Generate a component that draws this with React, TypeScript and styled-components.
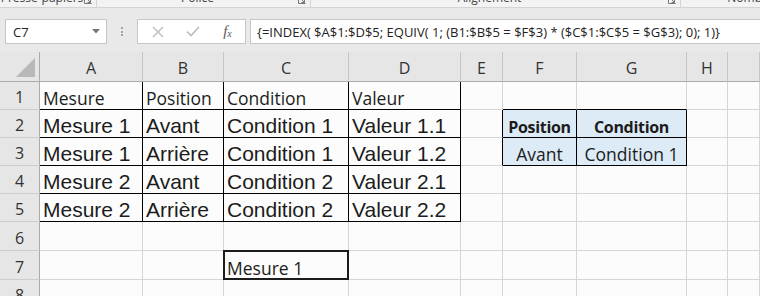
import React from 'react';
import styled, { createGlobalStyle, css } from 'styled-components';

const GlobalStyle = createGlobalStyle`
  html, body { margin: 0; padding: 0; background: #e9e9e9; overflow: hidden; }
  body { width: 760px; height: 296px; }
`;

const Page = styled.div`
  width: 760px;
  height: 296px;
  overflow: hidden;
  display: flex;
  flex-direction: column;
  background: #e9e9e9;
`;

/* ---------- Ribbon strip (cut-off group labels) ---------- */
const RibbonStrip = styled.div`
  height: 8px;
  box-sizing: border-box;
  display: flex;
  background: #f3f3f3;
  border-bottom: 1px solid #d4d4d4;
  overflow: hidden;
  flex-shrink: 0;
`;

const RibbonGroup = styled.div<{ $w: number }>`
  width: ${p => p.$w}px;
  flex-shrink: 0;
  display: flex;
  align-items: flex-start;
  box-sizing: border-box;
  border-right: 1px solid #d4d4d4;
`;

const RibbonLabel = styled.span`
  flex: 1;
  text-align: center;
  font-family: 'Open Sans', sans-serif;
  font-size: 12px;
  line-height: 12px;
  margin-top: -8px;
  color: #444;
  white-space: nowrap;
`;

const Launcher = styled.svg`
  width: 8px;
  height: 8px;
  margin: -4px 4px 0 0;
  flex-shrink: 0;
`;

/* ---------- Formula bar ---------- */
const FormulaBar = styled.div`
  height: 44px;
  box-sizing: border-box;
  padding: 11px 0 0 5px;
  display: flex;
  align-items: flex-start;
  flex-shrink: 0;
`;

const Box = css`
  height: 25px;
  box-sizing: border-box;
  background: #fff;
  border: 1px solid #c6c6c6;
  display: flex;
  align-items: center;
`;

const NameBox = styled.div`
  ${Box};
  width: 102px;
  padding: 0 6px 0 7px;
  justify-content: space-between;
  font-family: 'Open Sans', sans-serif;
  font-size: 13px;
  color: #222;
`;

const Grip = styled.div`
  width: 30px;
  height: 25px;
  display: flex;
  flex-direction: column;
  align-items: center;
  justify-content: center;
  gap: 1.5px;
`;

const GripDot = styled.span`
  width: 2px;
  height: 2px;
  background: #a3a3a3;
`;

const ButtonsBox = styled.div`
  ${Box};
  width: 109px;
  padding-left: 2px;
  margin-right: 4px;
`;

const IconSlot = styled.div`
  width: 36px;
  height: 23px;
  display: flex;
  align-items: center;
  justify-content: center;
`;

const Fx = styled.span`
  font-family: 'Liberation Serif', serif;
  font-style: italic;
  font-size: 15px;
  color: #555;
  line-height: 1;
  & > sub {
    font-size: 10px;
    vertical-align: baseline;
    position: relative;
    top: 1px;
  }
`;

const FormulaInput = styled.div`
  ${Box};
  flex: 1;
  margin-right: -3px;
  padding-left: 6px;
  font-family: 'Open Sans', sans-serif;
  font-size: 13px;
  color: #222;
  white-space: nowrap;
  overflow: hidden;
`;

/* ---------- Sheet grid ---------- */
const Sheet = styled.div`
  display: grid;
  grid-template-columns: 40px 103px 81px 125px 112px 42px 74px 110px 41px 1fr;
  grid-template-rows: 30px 28px 28px 28px 28px 28px 29px 29px 28px;
  background: #fbfcfb;
`;

const Corner = styled.div`
  background: #e6e6e6;
  border-right: 1px solid #ababab;
  border-bottom: 1px solid #ababab;
  display: flex;
  align-items: flex-end;
  justify-content: flex-end;
  padding: 0 4px 4px 0;
`;

const ColHead = styled.div`
  background: #e6e6e6;
  box-sizing: border-box;
  border-right: 1px solid #c6c6c6;
  border-bottom: 1px solid #ababab;
  display: flex;
  align-items: center;
  justify-content: center;
  padding-top: 3px;
  font-family: 'Open Sans', sans-serif;
  font-size: 16px;
  color: #333;
`;

const RowHead = styled.div`
  background: #e6e6e6;
  box-sizing: border-box;
  border-right: 1px solid #ababab;
  border-bottom: 1px solid #cdcdcd;
  display: flex;
  align-items: center;
  justify-content: center;
  padding-top: 3px;
  font-family: 'Open Sans', sans-serif;
  font-size: 16px;
  color: #333;
`;

type Kind = 'label' | 'big' | 'bold' | 'center';

const kindStyle: Record<Kind, ReturnType<typeof css>> = {
  label: css`
    font-family: 'Open Sans', sans-serif;
    font-size: 17.5px;
    padding-bottom: 2px;
  `,
  big: css`
    font-family: 'Liberation Sans', Arial, sans-serif;
    font-size: 21px;
    padding-bottom: 1px;
  `,
  bold: css`
    font-family: 'Open Sans', sans-serif;
    font-size: 16px;
    font-weight: 700;
    letter-spacing: -0.3px;
    justify-content: center;
    padding-left: 0;
    padding-bottom: 2px;
  `,
  center: css`
    font-family: 'Open Sans', sans-serif;
    font-size: 17.5px;
    justify-content: center;
    padding-left: 0;
    padding-bottom: 2px;
  `,
};

const Cell = styled.div<{ $kind: Kind; $rb: boolean; $bb: boolean; $fill?: string; $selected?: boolean }>`
  position: relative;
  box-sizing: border-box;
  min-width: 0;
  border-right: 1px solid ${p => (p.$rb ? '#000' : '#d6d6d6')};
  border-bottom: 1px solid ${p => (p.$bb ? '#000' : '#d6d6d6')};
  background: ${p => p.$fill ?? '#fbfcfb'};
  display: flex;
  align-items: flex-end;
  justify-content: flex-start;
  padding-left: 3px;
  line-height: 1;
  white-space: nowrap;
  color: #1c1c1c;
  ${p => kindStyle[p.$kind]};
  ${p =>
    p.$selected &&
    css`
      &::after {
        content: '';
        position: absolute;
        top: -1px;
        left: -1px;
        right: -1px;
        bottom: -1px;
        border: 2px solid #1c1c1c;
        pointer-events: none;
      }
    `};
`;

const COLS = ['A', 'B', 'C', 'D', 'E', 'F', 'G', 'H', 'I'];
const ROWS = [1, 2, 3, 4, 5, 6, 7, 8];

const data: Record<string, { text: string; kind: Kind }> = {
  A1: { text: 'Mesure', kind: 'label' },
  B1: { text: 'Position', kind: 'label' },
  C1: { text: 'Condition', kind: 'label' },
  D1: { text: 'Valeur', kind: 'label' },
  A2: { text: 'Mesure 1', kind: 'big' },
  B2: { text: 'Avant', kind: 'big' },
  C2: { text: 'Condition 1', kind: 'big' },
  D2: { text: 'Valeur 1.1', kind: 'big' },
  A3: { text: 'Mesure 1', kind: 'big' },
  B3: { text: 'Arrière', kind: 'big' },
  C3: { text: 'Condition 1', kind: 'big' },
  D3: { text: 'Valeur 1.2', kind: 'big' },
  A4: { text: 'Mesure 2', kind: 'big' },
  B4: { text: 'Avant', kind: 'big' },
  C4: { text: 'Condition 2', kind: 'big' },
  D4: { text: 'Valeur 2.1', kind: 'big' },
  A5: { text: 'Mesure 2', kind: 'big' },
  B5: { text: 'Arrière', kind: 'big' },
  C5: { text: 'Condition 2', kind: 'big' },
  D5: { text: 'Valeur 2.2', kind: 'big' },
  F2: { text: 'Position', kind: 'bold' },
  G2: { text: 'Condition', kind: 'bold' },
  F3: { text: 'Avant', kind: 'center' },
  G3: { text: 'Condition 1', kind: 'center' },
  C7: { text: 'Mesure 1', kind: 'label' },
};

const inTable = (r: number, c: number) => r >= 1 && r <= 5 && c <= 3;
const inLookup = (r: number, c: number) => r >= 2 && r <= 3 && c >= 5 && c <= 6;

const FORMULA = '{=INDEX( $A$1:$D$5; EQUIV( 1; (B1:$B$5 = $F$3) * ($C$1:$C$5 = $G$3); 0); 1)}';

const LauncherIcon = () => (
  <Launcher viewBox="0 0 8 8">
    <path d="M0.5 0.5 V7.5 H7.5" fill="none" stroke="#777" strokeWidth="1" />
    <path d="M2.5 2.5 L6.5 6.5 M6.5 3.5 V6.5 H3.5" fill="none" stroke="#777" strokeWidth="1" />
  </Launcher>
);

export default function App() {
  return (
    <Page>
      <GlobalStyle />
      <RibbonStrip>
        <RibbonGroup $w={97}>
          <RibbonLabel>Presse-papiers</RibbonLabel>
          <LauncherIcon />
        </RibbonGroup>
        <RibbonGroup $w={214}>
          <RibbonLabel>Police</RibbonLabel>
          <LauncherIcon />
        </RibbonGroup>
        <RibbonGroup $w={370}>
          <RibbonLabel>Alignement</RibbonLabel>
          <LauncherIcon />
        </RibbonGroup>
        <RibbonGroup $w={140}>
          <RibbonLabel>Nombre</RibbonLabel>
        </RibbonGroup>
      </RibbonStrip>

      <FormulaBar>
        <NameBox>
          <span>C7</span>
          <svg width="8" height="5" viewBox="0 0 8 5">
            <path d="M0 0 H8 L4 4.5 Z" fill="#777" />
          </svg>
        </NameBox>
        <Grip>
          <GripDot />
          <GripDot />
          <GripDot />
        </Grip>
        <ButtonsBox>
          <IconSlot>
            <svg width="12" height="12" viewBox="0 0 12 12">
              <path d="M1 1 L11 11 M11 1 L1 11" stroke="#bcbcbc" strokeWidth="1.4" fill="none" />
            </svg>
          </IconSlot>
          <IconSlot>
            <svg width="14" height="11" viewBox="0 0 14 11">
              <path d="M1 5.5 L5 9.5 L13 1" stroke="#bcbcbc" strokeWidth="1.6" fill="none" />
            </svg>
          </IconSlot>
          <IconSlot>
            <Fx>
              f<sub>x</sub>
            </Fx>
          </IconSlot>
        </ButtonsBox>
        <FormulaInput>{FORMULA}</FormulaInput>
      </FormulaBar>

      <Sheet>
        <Corner>
          <svg width="19" height="19" viewBox="0 0 19 19">
            <path d="M19 0 V19 H0 Z" fill="#b8b8b8" />
          </svg>
        </Corner>
        {COLS.map(c => (
          <ColHead key={c}>{c === 'I' ? '' : c}</ColHead>
        ))}
        {ROWS.map(r => (
          <React.Fragment key={r}>
            <RowHead>{r}</RowHead>
            {COLS.map((c, ci) => {
              const id = `${c}${r}`;
              const d = data[id];
              const rb = inTable(r, ci) || inLookup(r, ci) || ((r === 2 || r === 3) && ci === 4);
              const bb = inTable(r, ci) || inLookup(r, ci) || (r === 1 && (ci === 5 || ci === 6));
              return (
                <Cell
                  key={id}
                  $kind={d?.kind ?? 'label'}
                  $rb={rb}
                  $bb={bb}
                  $fill={inLookup(r, ci) ? '#ddebf7' : undefined}
                  $selected={id === 'C7'}
                >
                  {d?.text}
                </Cell>
              );
            })}
          </React.Fragment>
        ))}
      </Sheet>
    </Page>
  );
}
